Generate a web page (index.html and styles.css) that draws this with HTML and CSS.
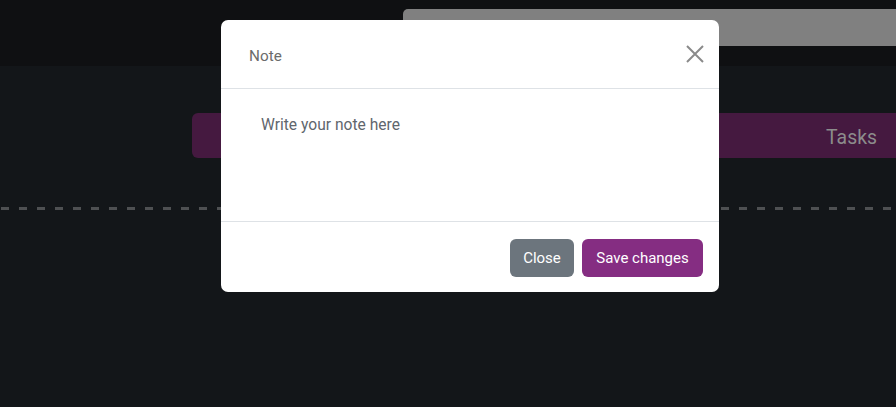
FILE: index.html
```html
<!DOCTYPE html>
<html lang="en">
<head>
<meta charset="utf-8">
<title>Note</title>
<link rel="stylesheet" href="styles.css">
</head>
<body>
<header class="topbar">
  <div class="search-bar"></div>
</header>
<main class="board">
  <div class="column-head"><span class="column-title">Tasks</span></div>
  <div class="divider"></div>
</main>

<div class="modal">
  <div class="modal-dialog">
    <div class="modal-header">
      <h5 class="modal-title">Note</h5>
      <button class="btn-close" type="button" aria-label="Close">
        <svg width="18" height="18" viewBox="0 0 18 18"><path d="M1 1 L17 17 M17 1 L1 17" stroke="#8a8a8a" stroke-width="2" fill="none"/></svg>
      </button>
    </div>
    <div class="modal-body">
      <textarea class="note-input" placeholder="Write your note here"></textarea>
    </div>
    <div class="modal-footer">
      <button class="btn btn-secondary" type="button">Close</button>
      <button class="btn btn-primary" type="button">Save changes</button>
    </div>
  </div>
</div>
</body>
</html>
```

FILE: styles.css
```css
html, body {
  margin: 0;
  padding: 0;
}
body {
  background: #131619;
  font-family: Roboto, "Liberation Sans", sans-serif;
  width: 896px;
  height: 407px;
  overflow: hidden;
}
.topbar {
  height: 66px;
  background: #0f1012;
  display: flex;
  justify-content: flex-end;
  padding-top: 9px;
  box-sizing: border-box;
}
.search-bar {
  width: 493px;
  height: 37px;
  background: #808080;
  border-radius: 5px 0 0 0;
}
.board {
  padding-top: 47px;
}
.column-head {
  margin-left: 192px;
  height: 45px;
  box-sizing: border-box;
  background: #451940;
  border-radius: 6px 0 0 6px;
  display: flex;
  align-items: center;
  justify-content: flex-end;
  padding: 3px 19px 0 0;
}
.column-title {
  color: #8c8c8c;
  font-size: 19.4px;
}
.divider {
  margin-top: 49px;
  height: 3px;
  background: repeating-linear-gradient(90deg, #4e5052 0 8px, transparent 8px 18px);
  background-position: 1px 0;
}
.modal {
  position: absolute;
  left: 221px;
  top: 20px;
}
.modal-dialog {
  width: 498px;
  background: #fff;
  border-radius: 7px;
  overflow: hidden;
}
.modal-header {
  height: 68px;
  display: flex;
  align-items: center;
  justify-content: space-between;
  padding: 0 14px 0 28px;
  border-bottom: 1px solid #dee2e6;
}
.modal-title {
  margin: 0;
  font-family: Roboto, sans-serif;
  font-weight: 400;
  font-size: 15.3px;
  color: #6b6b6b;
  padding-top: 4px;
}
.btn-close {
  border: 0;
  background: none;
  padding: 0;
  width: 18px;
  height: 18px;
  margin-right: 1px;
  margin-top: 0;
  display: flex;
}
.modal-body {
  height: 132px;
  padding: 27px 28px 0 40px;
  box-sizing: border-box;
}
.note-input {
  border: 0;
  outline: 0;
  resize: none;
  width: 100%;
  height: 80px;
  padding: 0;
  font-family: Roboto, sans-serif;
  font-size: 15.6px;
  color: #5f666d;
}
.note-input::placeholder {
  color: #5f666d;
}
.modal-footer {
  height: 71px;
  border-top: 1px solid #dee2e6;
  display: flex;
  align-items: center;
  justify-content: flex-end;
  gap: 8px;
  padding: 0 16px 0 0;
  box-sizing: border-box;
}
.btn {
  border: 0;
  height: 38px;
  border-radius: 6px;
  color: #fff;
  font-family: Roboto, sans-serif;
  font-size: 15px;
  padding: 0 13px;
  margin-top: 1px;
}
.btn-secondary {
  background: #6c757d;
  width: 64px;
}
.btn-primary {
  background: #852d82;
  width: 121px;
}
```
